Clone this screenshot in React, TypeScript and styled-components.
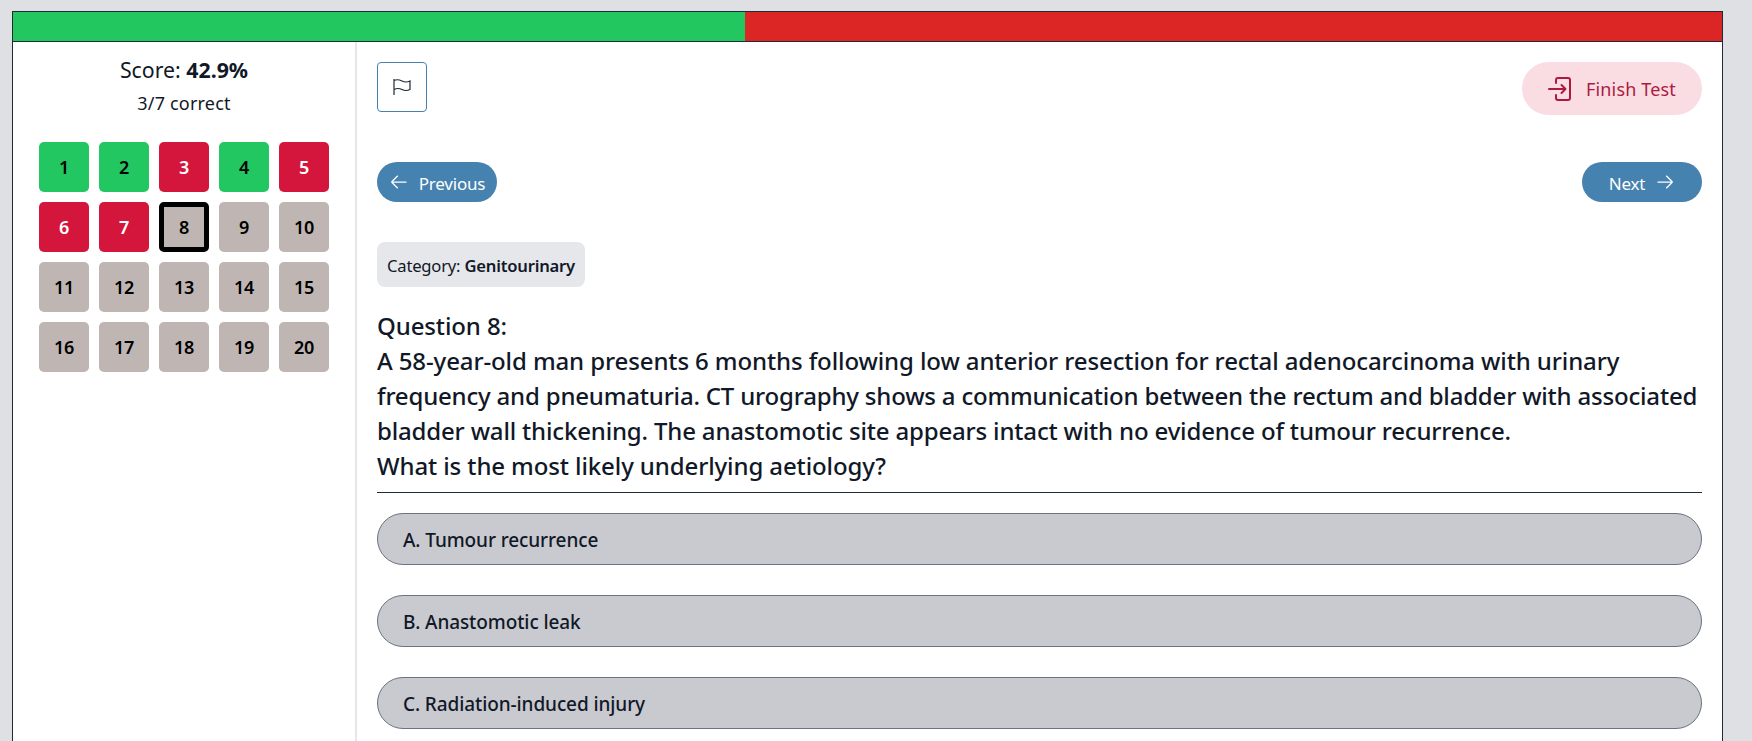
import React from "react";
import styled, { createGlobalStyle } from "styled-components";

const Global = createGlobalStyle`
  html, body { margin: 0; padding: 0; height: 100%; overflow: hidden; background: #dee0e3; }
  body { font-family: "Noto Sans", "Open Sans", sans-serif; color: #111827; }
  * { box-sizing: border-box; }
`;

const Page = styled.div`
  padding: 11px 28px 0 12px;
`;
const Card = styled.div`
  width: 1711px;
  background: #fff;
  border: 1px solid #1f2937;
  border-bottom: 0;
`;
const Progress = styled.div`
  display: flex;
  height: 30px;
  border-bottom: 1px solid #1f2937;
`;
const Segment = styled.div<{ $color: string; $grow: number }>`
  background: ${(p) => p.$color};
  flex: ${(p) => p.$grow} 0 0;
`;
const Body = styled.div`
  display: flex;
`;
const Sidebar = styled.aside`
  width: 344px;
  flex: none;
  border-right: 2px solid #e5e7eb;
  padding: 13px 0 0 26px;
  height: 700px;
`;
const Score = styled.div`
  width: 290px;
  text-align: center;
  font-size: 21.3px;
  line-height: 30px;
`;
const Correct = styled.div`
  width: 290px;
  text-align: center;
  font-size: 18px;
  line-height: 26px;
  margin-top: 5px;
  letter-spacing: 0.2px;
`;
const Grid = styled.div`
  display: grid;
  grid-template-columns: repeat(5, 50px);
  grid-auto-rows: 50px;
  gap: 10px;
  margin-top: 26px;
`;
const Cell = styled.div<{ $bg: string; $fg: string; $current?: boolean }>`
  display: flex;
  align-items: center;
  justify-content: center;
  border-radius: 5px;
  background: ${(p) => p.$bg};
  color: ${(p) => p.$fg};
  font-size: 18px;
  font-weight: 600;
  border: ${(p) => (p.$current ? "5px solid #000" : "0")};
  letter-spacing: -0.3px;
`;
const Main = styled.main`
  flex: 1;
  padding: 20px 20px 0 20px;
`;
const Row = styled.div`
  display: flex;
  justify-content: space-between;
  align-items: flex-start;
`;
const FlagButton = styled.button`
  width: 50px;
  height: 50px;
  display: flex;
  align-items: center;
  justify-content: center;
  padding: 0;
  background: #fff;
  border: 1px solid #4682b0;
  border-radius: 4px;
  color: #1f2937;
`;
const FinishButton = styled.button`
  width: 180px;
  height: 53px;
  display: flex;
  align-items: center;
  justify-content: center;
  gap: 14px;
  padding: 0;
  border: 0;
  border-radius: 27px;
  background: #f9dde3;
  color: #ad1a3d;
  font: 400 18px "Noto Sans", sans-serif;
  letter-spacing: 0.15px;
`;
const NavRow = styled(Row)`
  margin-top: 47px;
`;
const NavButton = styled.button`
  width: 120px;
  height: 40px;
  display: flex;
  align-items: center;
  justify-content: center;
  gap: 10px;
  padding: 0;
  border: 0;
  border-radius: 20px;
  background: #4682b0;
  color: #fff;
  font: 400 17px "Noto Sans", sans-serif;
  letter-spacing: -0.2px;
`;
const NavLabel = styled.span`
  padding-top: 2px;
`;
const Category = styled.div`
  display: inline-block;
  margin-top: 40px;
  padding: 0 10.5px 0 10px;
  height: 45px;
  line-height: 47px;
  border-radius: 8px;
  background: #e6e7eb;
  font-size: 16.6px;
  letter-spacing: -0.2px;
  color: #111827;
`;
const Strong = styled.b`
  font-weight: 600;
`;
const Question = styled.div`
  margin-top: 21px;
  padding-bottom: 9px;
  font-size: 24px;
  line-height: 35.1px;
  font-weight: 500;
  color: #111827;
  border-bottom: 1px solid #1f2937;
`;
const QuestionLine = styled.div<{ $tracking: number }>`
  white-space: nowrap;
  letter-spacing: ${(p) => p.$tracking}px;
`;
const Options = styled.div`
  display: flex;
  flex-direction: column;
  gap: 30px;
  margin-top: 20px;
`;
const Option = styled.div`
  height: 52px;
  display: flex;
  align-items: center;
  padding: 1px 0 0 25px;
  border: 1px solid #6b7280;
  border-radius: 26px;
  background: #c9cacf;
  font-size: 19px;
  font-weight: 500;
  letter-spacing: -0.1px;
  color: #111827;
`;

const red = "#d4163c";
const green = "#22c761";
const grey = "#bfb5b2";
const statuses: Record<number, string> = { 1: green, 2: green, 3: red, 4: green, 5: red, 6: red, 7: red };

const questionLines: [string, number][] = [
  ["Question 8:", -0.11],
  ["A 58-year-old man presents 6 months following low anterior resection for rectal adenocarcinoma with urinary", -0.11],
  ["frequency and pneumaturia. CT urography shows a communication between the rectum and bladder with associated", -0.19],
  ["bladder wall thickening. The anastomotic site appears intact with no evidence of tumour recurrence.", -0.17],
  ["What is the most likely underlying aetiology?", -0.11],
];

const ArrowLeft = () => (
  <svg width="20" height="20" viewBox="0 0 24 24" fill="none" stroke="currentColor" strokeWidth="1.5">
    <path d="M10.500 19.500 3 12m0 0 7.500-7.500M3 12h18" />
  </svg>
);
const ArrowRight = () => (
  <svg width="20" height="20" viewBox="0 0 24 24" fill="none" stroke="currentColor" strokeWidth="1.5">
    <path d="M13.500 4.500 21 12m0 0-7.500 7.500M21 12H3" />
  </svg>
);
const FlagIcon = () => (
  <svg width="18" height="18" viewBox="0 0 18 18" fill="none" stroke="currentColor" strokeWidth="1.200">
    <path d="M1 1v16M1 2.500C4 1 6 1.500 9 3s5 1.500 8 0v8.500c-3 1.500-5 1.500-8 0s-5-1.500-8 0" />
  </svg>
);
const FinishIcon = () => (
  <svg width="24" height="24" viewBox="0 0 24 24" fill="none" stroke="currentColor" strokeWidth="2" strokeLinecap="round" strokeLinejoin="round">
    <path d="M8 6V3a2 2 0 0 1 2-2h10a2 2 0 0 1 2 2v18a2 2 0 0 1-2 2H10a2 2 0 0 1-2-2v-3" />
    <path d="M1 12h16.500M13.500 8l4 4-4 4" />
  </svg>
);

export default function App() {
  return (
    <Page>
      <Global />
      <Card>
        <Progress>
          <Segment $color="#22c75f" $grow={732} />
          <Segment $color="#dc2626" $grow={977} />
        </Progress>
        <Body>
          <Sidebar>
            <Score>
              Score: <b>42.9%</b>
            </Score>
            <Correct>3/7 correct</Correct>
            <Grid>
              {Array.from({ length: 20 }, (_, i) => i + 1).map((n) => {
                const bg = statuses[n] ?? grey;
                return (
                  <Cell key={n} $bg={bg} $fg={bg === red ? "#fff" : "#000"} $current={n === 8}>
                    {n}
                  </Cell>
                );
              })}
            </Grid>
          </Sidebar>
          <Main>
            <Row>
              <FlagButton aria-label="Flag"><FlagIcon /></FlagButton>
              <FinishButton><FinishIcon />Finish Test</FinishButton>
            </Row>
            <NavRow>
              <NavButton><ArrowLeft /><NavLabel>Previous</NavLabel></NavButton>
              <NavButton><NavLabel>Next</NavLabel><ArrowRight /></NavButton>
            </NavRow>
            <Category>Category: <Strong>Genitourinary</Strong></Category>
            <Question>
              {questionLines.map(([text, tracking]) => (
                <QuestionLine key={text} $tracking={tracking}>{text}</QuestionLine>
              ))}
            </Question>
            <Options>
              <Option>A. Tumour recurrence</Option>
              <Option>B. Anastomotic leak</Option>
              <Option>C. Radiation-induced injury</Option>
            </Options>
          </Main>
        </Body>
      </Card>
    </Page>
  );
}
